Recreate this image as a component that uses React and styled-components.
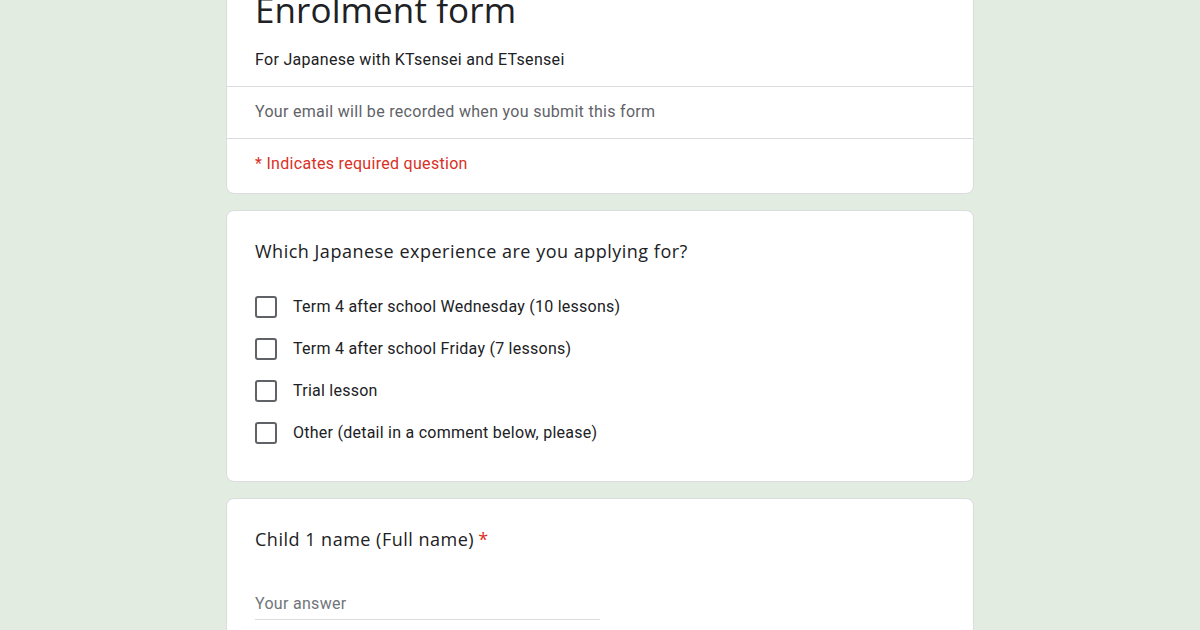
import React from "react";
import styled, { createGlobalStyle } from "styled-components";

const options = [
  "Term 4 after school Wednesday (10 lessons)",
  "Term 4 after school Friday (7 lessons)",
  "Trial lesson",
  "Other (detail in a comment below, please)",
];

const GlobalStyle = createGlobalStyle`
  html, body {
    margin: 0;
    padding: 0;
    background: #e3ece0;
    font-family: Roboto, "Noto Sans", sans-serif;
    color: #202124;
  }
`;

const Page = styled.main`
  width: 748px;
  margin: -50px auto 0;
  display: flex;
  flex-direction: column;
  gap: 16px;
`;

const Card = styled.section`
  background: #fff;
  border: 1px solid #dadce0;
  border-radius: 8px;
  padding: ${(p) => p.$pad || "27px 28px 36px"};
`;

const HeaderCard = styled(Card)`
  padding: 0;
`;

const HeaderTop = styled.div`
  padding: 36px 28px 15px;
`;

const Title = styled.h1`
  margin: 0;
  font-family: "Open Sans", sans-serif;
  font-weight: 400;
  font-size: 35px;
  line-height: 45px;
  letter-spacing: 0.1px;
  color: #202124;
`;

const Description = styled.p`
  margin: 17px 0 0;
  font-size: 16px;
  line-height: 22px;
  letter-spacing: 0.3px;
  color: #202124;
`;

const Note = styled.div`
  border-top: 1px solid #dadce0;
  padding: 14px 28px ${(p) => p.$bottom || "15px"};
  font-size: 16px;
  line-height: 22px;
  letter-spacing: 0.3px;
  color: ${(p) => p.$color || "#5f6368"};
`;

const Question = styled.h2`
  margin: 0;
  font-family: "Open Sans", sans-serif;
  font-weight: 400;
  font-size: 18px;
  line-height: 27px;
  letter-spacing: 0.5px;
  color: #202124;
`;

const Required = styled.span`
  color: #d93025;
  margin-left: 4px;
`;

const OptionList = styled.div`
  margin-top: 30px;
  display: flex;
  flex-direction: column;
  gap: 18px;
`;

const Option = styled.label`
  display: flex;
  align-items: center;
  gap: 16px;
  font-size: 16px;
  line-height: 24px;
  letter-spacing: 0.25px;
  color: #202124;
`;

const Box = styled.span`
  width: 18px;
  height: 18px;
  border: 2px solid #5f6368;
  border-radius: 3px;
  flex-shrink: 0;
`;

const AnswerInput = styled.input`
  display: block;
  margin-top: 40px;
  width: 345px;
  border: none;
  border-bottom: 1px solid #dadce0;
  outline: none;
  padding: 0 0 4px;
  font-family: Roboto, sans-serif;
  font-size: 16px;
  line-height: 22px;
  letter-spacing: 0.3px;
  background: transparent;
  &::placeholder {
    color: #70757a;
  }
`;

export default function App() {
  return (
    <>
      <GlobalStyle />
      <Page>
        <HeaderCard>
          <HeaderTop>
            <Title>Enrolment form</Title>
            <Description>For Japanese with KTsensei and ETsensei</Description>
          </HeaderTop>
          <Note>Your email will be recorded when you submit this form</Note>
          <Note $color="#d93025" $bottom="18px">
            * Indicates required question
          </Note>
        </HeaderCard>

        <Card>
          <Question>Which Japanese experience are you applying for?</Question>
          <OptionList>
            {options.map((o) => (
              <Option key={o}>
                <Box />
                {o}
              </Option>
            ))}
          </OptionList>
        </Card>

        <Card>
          <Question>
            Child 1 name (Full name)
            <Required>*</Required>
          </Question>
          <AnswerInput placeholder="Your answer" />
        </Card>
      </Page>
    </>
  );
}
